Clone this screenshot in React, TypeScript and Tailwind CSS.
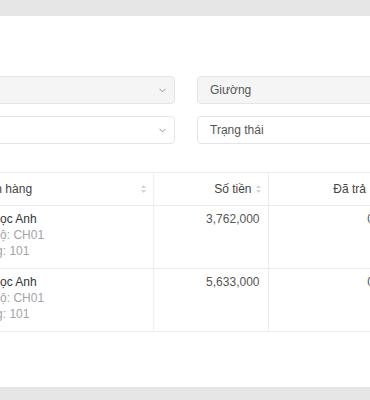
import { ChevronDown } from "lucide-react"

const rows = [
  { name: "Lê Ngọc Anh", unit: "CH01", room: "101", amount: "3,762,000", paid: "0" },
  { name: "Lê Ngọc Anh", unit: "CH01", room: "101", amount: "5,633,000", paid: "0" },
]

const SortIcon = () => (
  <svg width="7" height="10" viewBox="0 0 7 10" className="shrink-0">
    <path d="M3.5 1 L6 4 H1 Z" fill="#d4d4d8" />
    <path d="M3.5 9 L6 6 H1 Z" fill="#d4d4d8" />
  </svg>
)

const Select = ({ disabled }: { disabled?: boolean }) => (
  <div
    className={`flex h-[28px] items-center justify-end rounded-[4px] border border-[#e4e4ea] pr-[6px] ${
      disabled ? "bg-[#f5f5f6]" : "bg-white"
    }`}
  >
    <ChevronDown size={11} strokeWidth={2} className="text-[#8a8a95]" />
  </div>
)

const Input = ({ label, disabled }: { label: string; disabled?: boolean }) => (
  <div
    className={`flex h-[28px] items-center rounded-[4px] border border-[#e4e4ea] px-[12px] text-[12px] text-[#555] ${
      disabled ? "bg-[#f5f5f6]" : "bg-white"
    }`}
  >
    {label}
  </div>
)

export default function App() {
  return (
    <div
      className="h-[400px] w-[370px] overflow-hidden bg-[#e6e6e6] pt-[16px]"
      style={{ fontFamily: '"Liberation Sans", Arial, sans-serif' }}
    >
      <div className="h-[371px] bg-white">
        <div className="-ml-[44px] w-[700px] pt-[60px]">
          <div className="grid w-[460px] grid-cols-2 gap-x-[22px] gap-y-[12px]">
            <Select disabled />
            <Input label="Giường" disabled />
            <Select />
            <Input label="Trạng thái" />
          </div>

          <table className="mt-[28px] border-collapse text-[12px]">
            <thead>
              <tr className="h-[33px] border-y border-[#ececf1] text-[#444]">
                <th className="w-[197px] border-r border-[#ececf1] pl-[12px] pr-[6px] font-normal">
                  <div className="flex items-center justify-between">
                    <span>Khách hàng</span>
                    <SortIcon />
                  </div>
                </th>
                <th className="w-[115px] border-r border-[#ececf1] pr-[6px] font-normal">
                  <div className="flex items-center justify-end gap-[3px]">
                    <span>Số tiền</span>
                    <SortIcon />
                  </div>
                </th>
                <th className="w-[114px] pr-[6px] font-normal">
                  <div className="flex items-center justify-end gap-[3px]">
                    <span>Đã trả</span>
                    <SortIcon />
                  </div>
                </th>
              </tr>
            </thead>
            <tbody>
              {rows.map((r, i) => (
                <tr key={i} className="h-[63px] border-b border-[#ececf1] align-top">
                  <td className="border-r border-[#ececf1] pl-[12px] pt-[5px] leading-[16px]">
                    <div className="text-[#333]">{r.name}</div>
                    <div className="text-[#a3a3a8]">Căn hộ: {r.unit}</div>
                    <div className="text-[#a3a3a8]">Phòng: {r.room}</div>
                  </td>
                  <td className="border-r border-[#ececf1] pr-[8px] pt-[5px] text-right leading-[16px] text-[#555]">
                    {r.amount}
                  </td>
                  <td className="pr-[8px] pt-[5px] text-right leading-[16px] text-[#555]">
                    {r.paid}
                  </td>
                </tr>
              ))}
            </tbody>
          </table>
        </div>
      </div>
    </div>
  )
}
